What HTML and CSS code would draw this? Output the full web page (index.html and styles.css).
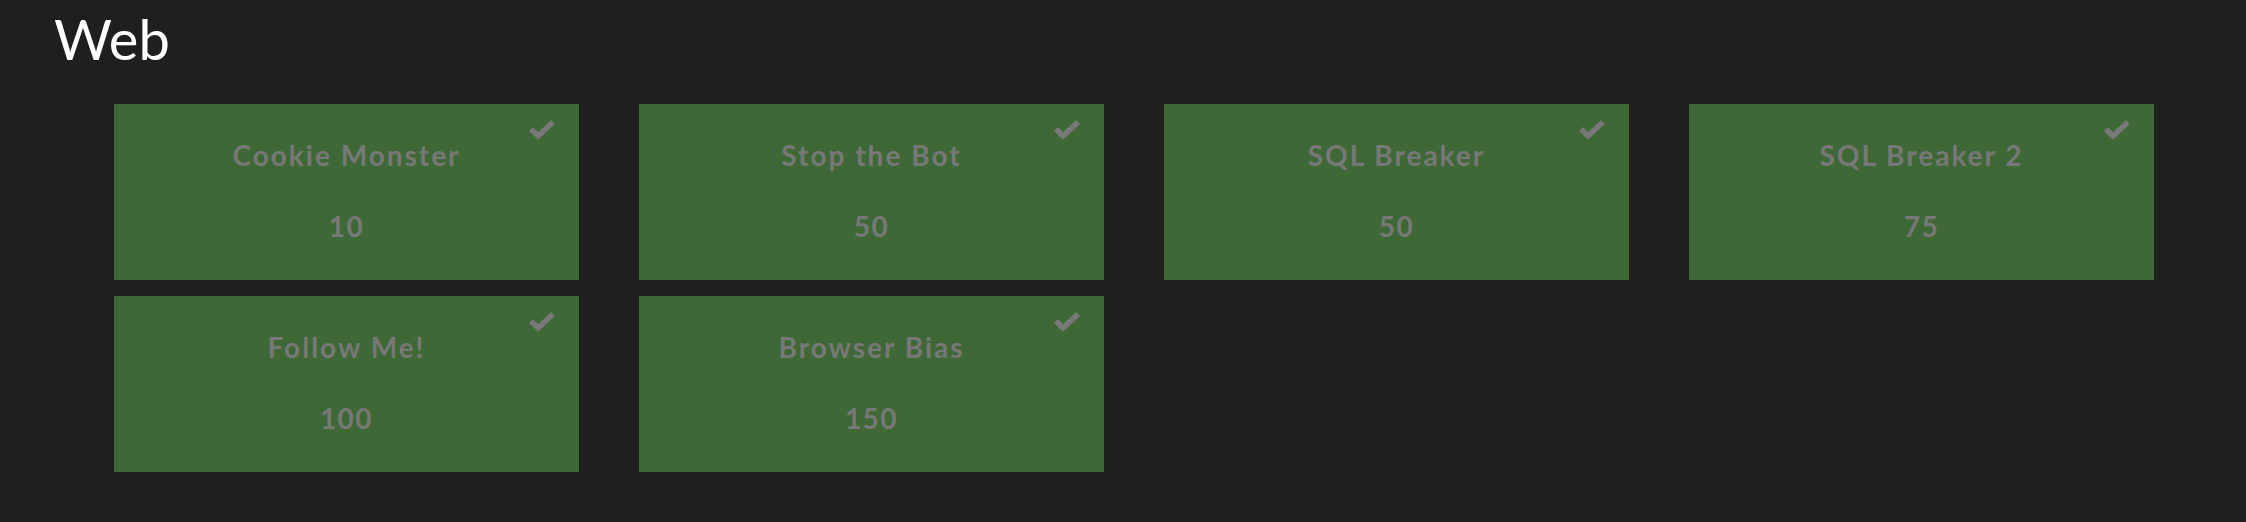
FILE: index.html
```html
<!DOCTYPE html>
<html lang="en">
<head>
    <meta charset="UTF-8">
    <title>Web</title>
    <link rel="stylesheet" href="styles.css">
</head>
<body>
    <div class="category">
        <h2 class="category-title">Web</h2>
        <div class="challenges">
            <div class="challenge solved">
                <svg class="check" viewBox="0 0 28 20"><polyline points="3,10 10,17 25,3"/></svg>
                <h3>Cookie Monster</h3>
                <div class="points">10</div>
            </div>
            <div class="challenge solved">
                <svg class="check" viewBox="0 0 28 20"><polyline points="3,10 10,17 25,3"/></svg>
                <h3>Stop the Bot</h3>
                <div class="points">50</div>
            </div>
            <div class="challenge solved">
                <svg class="check" viewBox="0 0 28 20"><polyline points="3,10 10,17 25,3"/></svg>
                <h3>SQL Breaker</h3>
                <div class="points">50</div>
            </div>
            <div class="challenge solved">
                <svg class="check" viewBox="0 0 28 20"><polyline points="3,10 10,17 25,3"/></svg>
                <h3>SQL Breaker 2</h3>
                <div class="points">75</div>
            </div>
            <div class="challenge solved">
                <svg class="check" viewBox="0 0 28 20"><polyline points="3,10 10,17 25,3"/></svg>
                <h3>Follow Me!</h3>
                <div class="points">100</div>
            </div>
            <div class="challenge solved">
                <svg class="check" viewBox="0 0 28 20"><polyline points="3,10 10,17 25,3"/></svg>
                <h3>Browser Bias</h3>
                <div class="points">150</div>
            </div>
        </div>
    </div>
</body>
</html>
```

FILE: styles.css
```css
* {
    margin: 0;
    padding: 0;
    box-sizing: border-box;
}
body {
    background: #1f1f1f;
    color: white;
    font-family: 'Lato', sans-serif;
    height: 100vh;
    overflow: hidden;
}
.category {
    padding-top: 5px;
}
.category-title {
    font-size: 56px;
    font-weight: 400;
    line-height: 1.2;
    padding-left: 54px;
}
.challenges {
    display: grid;
    grid-template-columns: repeat(4, 465px);
    column-gap: 60px;
    row-gap: 16px;
    margin-top: 32px;
    margin-left: 114px;
}
.challenge {
    position: relative;
    height: 176px;
    background: #3e6836;
    color: #787878;
    text-align: center;
    padding-top: 35px;
}
.challenge h3 {
    font-size: 28px;
    font-weight: 700;
    line-height: 1.2;
    letter-spacing: 2px;
}
.challenge .points {
    font-size: 28px;
    font-weight: 700;
    line-height: 1.2;
    letter-spacing: 1.5px;
    margin-top: 37px;
}
.check {
    position: absolute;
    top: 15px;
    right: 23px;
    width: 28px;
    height: 20px;
    fill: none;
    stroke: #787878;
    stroke-width: 5.5;
}
```
